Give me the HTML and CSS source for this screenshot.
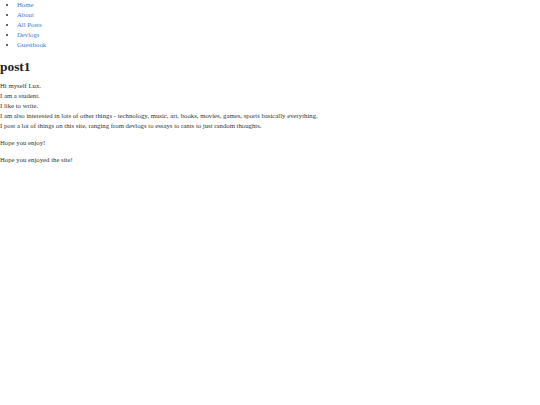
FILE: index.html
```html
<!DOCTYPE html>
<html>
<head>
<meta charset="utf-8">
<link rel="stylesheet" href="styles.css">
<title>post1</title>
</head>
<body>
<nav class="nav">
  <ul class="nav-list">
    <li><a href="#">Home</a></li>
    <li><a href="#">About</a></li>
    <li><a href="#">All Posts</a></li>
    <li><a href="#">Devlogs</a></li>
    <li><a href="#">Guestbook</a></li>
  </ul>
</nav>
<main class="post">
  <h1 class="post-title">post1</h1>
  <p class="post-text">Hi myself Lux.<br>I am a student.<br>I like to write.<br>I am also interested in lots of other things - technology, music, art, books, movies, games, sports basically everything.<br>I post a lot of things on this site, ranging from devlogs to essays to rants to just random thoughts.</p>
  <p class="post-text">Hope you enjoy!</p>
  <p class="post-text">Hope you enjoyed the site!</p>
</main>
</body>
</html>
```
FILE: styles.css
```css
html, body {
  margin: 0;
  padding: 0;
  background: #ffffff;
}
body {
  font-family: "Liberation Serif", "Times New Roman", serif;
  font-size: 6.75px;
  line-height: 10px;
  color: #333333;
}
.nav-list {
  margin: 0;
  padding-left: 17px;
  list-style: disc;
}
.nav-list a {
  color: #3a7bd5;
  text-decoration: none;
}
.post-title {
  font-size: 13.4px;
  line-height: 16px;
  margin: 9px 0 6px;
  color: #222222;
  font-weight: bold;
}
.post-text {
  margin: 0 0 7px;
}
```
